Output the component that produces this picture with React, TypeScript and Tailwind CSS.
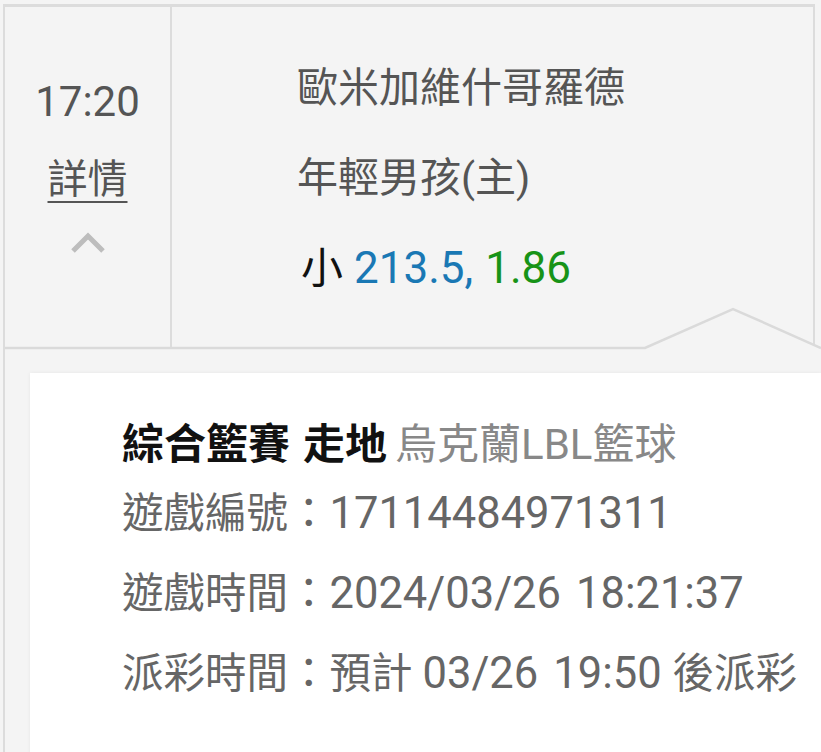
export default function App() {
  return (
    <div className="w-[821px] h-[752px] overflow-hidden bg-[#f4f4f4] pt-[4px] pl-[3px] font-[Roboto,'Noto_Sans_CJK_TC',sans-serif]">
      <div className="h-full border-l-2 border-[#dcdcdc]">
        {/* match row */}
        <div className="relative flex h-[344px] w-[810px] border-t-[3px] border-r-2 border-[#dcdcdc]">
          <div className="flex w-[167px] flex-col items-center border-r-2 border-[#dcdcdc] pt-[70px] text-[#555]">
            <div className="text-[42px] leading-[50px]">17:20</div>
            <div className="mt-[28px] text-[40px] leading-[50px] underline decoration-2 underline-offset-[8px]">詳情</div>
            <svg className="mt-[27px]" width="36" height="22" viewBox="0 0 36 22">
              <polyline points="3,19 18,4 33,19" fill="none" stroke="#bdbdbd" strokeWidth="5" />
            </svg>
          </div>
          <div className="flex-1 pl-[125px] pt-[36px] text-[41px] leading-[90px] text-[#555]">
            <div>歐米加維什哥羅德</div>
            <div>年輕男孩(主)</div>
            <div>
              <span className="ml-[4px] text-[42px] text-[#111]">小</span>
              <span className="ml-[11px] text-[44px] text-[#1a78b4]">213.5,</span>
              <span className="ml-[12px] text-[44px] text-[#179317]">1.86</span>
            </div>
          </div>
          {/* popup pointer */}
          <svg className="absolute left-0 bottom-[-3px]" width="816" height="44" viewBox="0 0 816 44">
            <polygon points="640,41 728,2 816,41 816,44 640,44" fill="#f4f4f4" />
            <polyline points="0,41 640,41 728,2 816,41" fill="none" stroke="#dadada" strokeWidth="2.5" />
          </svg>
        </div>

        {/* detail card */}
        <div className="ml-[25px] mt-[25px] h-[400px] bg-white pl-[92px] pt-[43px] text-[41.5px] text-[#666] shadow-[0_0_4px_rgba(0,0,0,0.06)]">
          <div className="text-[42px] leading-[58px]">
            <span className="font-bold text-[#111]">綜合籃賽</span>
            <span className="ml-[13px] font-bold text-[#111]">走地</span>
            <span className="ml-[8px] text-[#888]">烏克蘭LBL籃球</span>
          </div>
          <div className="leading-[80px]">
            遊戲編號：<span className="text-[43.5px]">17114484971311</span>
          </div>
          <div className="leading-[80px]">
            遊戲時間：<span className="text-[43.5px]">2024/03/26</span>
            <span className="ml-[15px] text-[43.5px]">18:21:37</span>
          </div>
          <div className="leading-[80px]">
            派彩時間：預計
            <span className="ml-[10px] text-[43.5px]">03/26</span>
            <span className="ml-[15px] text-[43.5px]">19:50</span>
            <span className="ml-[11px]">後派彩</span>
          </div>
        </div>
      </div>
    </div>
  );
}
